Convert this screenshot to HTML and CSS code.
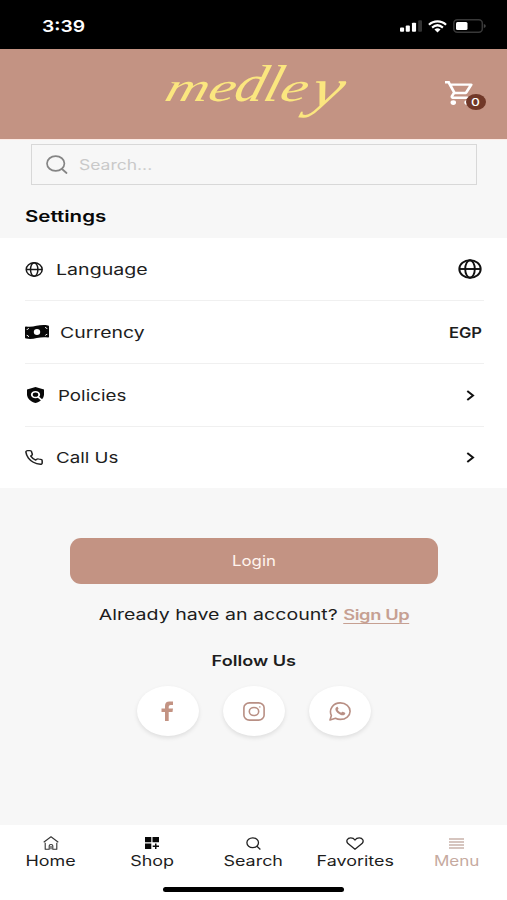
FILE: index.html
```html
<!DOCTYPE html>
<html lang="en">
<head>
<meta charset="utf-8">
<meta name="viewport" content="width=device-width, initial-scale=1">
<title>Medley – Settings</title>
<link rel="stylesheet" href="styles.css">
</head>
<body>
<div class="app">
  <div class="status">
    <span class="time"><span class="wide">3:39</span></span>
    <div class="indicators">
      <svg class="signal" viewBox="0 0 23 12" width="22" height="12"><rect x="0" y="7.500" width="4.300" height="4.500" rx="1" fill="#fff"/><rect x="6" y="5.500" width="4.300" height="6.500" rx="1" fill="#fff"/><rect x="12.500" y="2.500" width="4.300" height="9.500" rx="1" fill="#fff"/><rect x="19" y="0" width="4" height="12" rx="1" fill="#333"/></svg>
      <svg viewBox="0 0 20 13" width="19" height="13" fill="none" stroke="#fff" stroke-width="2.300"><path d="M1 4.700C6-.1 14-.1 19 4.700M4.300 7.700C7.800 4.600 12.200 4.600 15.700 7.700"/><path d="M6.800 9.700Q10 7.200 13.200 9.700L10 12.700Z" fill="#fff" stroke="none"/></svg>
      <svg viewBox="0 0 33 14" width="33" height="14"><rect x=".8" y=".8" width="28.500" height="12.400" rx="3.500" fill="none" stroke="#383838" stroke-width="1.500"/><rect x="3" y="3" width="11.500" height="8" rx="1.500" fill="#fff"/><path d="M30.800 5v4q2-.7 2-2t-2-2" fill="#444"/></svg>
    </div>
  </div>

  <header class="header">
    <svg class="logo" viewBox="0 0 190 76" width="190" height="76" role="img" aria-label="medley">
      <g class="logo-text" transform="translate(0 44) skewX(-16)">
        <text class="logo-low" x="4" y="0" textLength="70" lengthAdjust="spacingAndGlyphs">me</text>
        <text class="logo-tall" x="73" y="0" textLength="46" lengthAdjust="spacingAndGlyphs">dl</text>
        <text class="logo-low" x="119" y="0" textLength="27" lengthAdjust="spacingAndGlyphs">e</text>
        <text class="logo-tail" x="150" y="5" textLength="32" lengthAdjust="spacingAndGlyphs">y</text>
      </g>
    </svg>
    <div class="cart">
      <svg viewBox="1 2 21 20" width="29" height="24" preserveAspectRatio="none" fill="#fff"><path d="M15.550 13c.75 0 1.410-.41 1.750-1.030l3.580-6.490A.996.996 0 0 0 20.010 4H5.210l-.94-2H1v2h2l3.600 7.590-1.350 2.440C4.520 15.370 5.480 17 7 17h12v-2H7l1.100-2zM6.160 6h12.150l-2.760 5H8.530zM7 18a2 2 0 1 0 0 4 2 2 0 0 0 0-4m10 0a2 2 0 1 0 0 4 2 2 0 0 0 0-4"/></svg>
      <span class="badge"><span class="wide">0</span></span>
    </div>
  </header>

  <div class="search">
    <svg viewBox="0 0 22 19" width="22" height="19" fill="none" stroke="#858585" stroke-width="1.700" stroke-linecap="round"><ellipse cx="9.700" cy="8.500" rx="8.700" ry="7.400"/><path d="M16 14l4.500 4"/></svg>
    <span class="wide placeholder">Search...</span>
  </div>

  <h1 class="title"><span class="wide">Settings</span></h1>

  <main class="list">
    <div class="row">
      <svg class="globe" viewBox="0 0 18 15" width="18" height="15" fill="none" stroke="#181818" stroke-width="1.500"><ellipse cx="9.200" cy="7.500" rx="8" ry="6.700"/><ellipse cx="9.200" cy="7.500" rx="3.700" ry="6.700"/><path d="M1 7.500h16"/></svg>
      <span class="wide label language">Language</span>
      <svg class="end" viewBox="0 0 24 20" width="24" height="20" fill="none" stroke="#111" stroke-width="1.900"><ellipse cx="12" cy="10" rx="10.700" ry="8.700"/><ellipse cx="12" cy="10" rx="4.800" ry="8.700"/><path d="M1.500 10h21"/></svg>
    </div>
    <div class="row currency-row">
      <svg viewBox="0 0 24 14" width="24" height="14"><path d="M0 2.200Q0 1.400 1 1.500C9 3 14-1.200 23 .5Q24 .7 24 1.500V11.800Q24 12.700 23 12.500C14 11 9 15.200 1 13.500Q0 13.300 0 12.500Z" fill="#080808"/><ellipse cx="12" cy="7" rx="3.200" ry="3" fill="#fff"/><path d="M1.700 4.500Q3.500 4.500 3.700 3.200M20.300 2Q20.600 3.500 22.300 3.500M1.700 10.300Q3.500 10.300 3.700 12M20.300 10.700Q20.600 9.300 22.300 9.300" fill="none" stroke="#fff" stroke-width=".9"/></svg>
      <span class="wide label currency">Currency</span>
      <span class="wide end code">EGP</span>
    </div>
    <div class="row policies-row">
      <svg viewBox="3 1 18 22" width="17" height="16" preserveAspectRatio="none"><path d="M12 1 3 4.500V11c0 5.500 3.800 10.500 9 12 5.200-1.500 9-6.500 9-12V4.500Z" fill="#080808"/><circle cx="12" cy="11.500" r="3.900" fill="none" stroke="#fff" stroke-width="2"/><path d="m14.500 14.300 5 5.500" stroke="#fff" stroke-width="2"/></svg>
      <span class="wide label policies">Policies</span>
      <svg class="end chevron" viewBox="0 0 9 11" width="9" height="11"><path d="M1.300 1 7 5.500 1.300 10"/></svg>
    </div>
    <div class="row">
      <svg viewBox="1 1 22 22" width="18" height="15" preserveAspectRatio="none" fill="none" stroke="#222" stroke-width="1.900" stroke-linejoin="round"><path d="M22 16.920v3a2 2 0 0 1-2.180 2 19.790 19.790 0 0 1-8.630-3.070 19.500 19.500 0 0 1-6-6A19.790 19.790 0 0 1 2.120 4.180 2 2 0 0 1 4.110 2h3a2 2 0 0 1 2 1.720c.13.960.36 1.900.7 2.810a2 2 0 0 1-.45 2.110L8.090 9.910a16 16 0 0 0 6 6l1.270-1.270a2 2 0 0 1 2.110-.45c.91.340 1.850.57 2.810.7A2 2 0 0 1 22 16.920z"/></svg>
      <span class="wide label call">Call Us</span>
      <svg class="end chevron" viewBox="0 0 9 11" width="9" height="11"><path d="M1.300 1 7 5.500 1.300 10"/></svg>
    </div>
  </main>

  <section class="account">
    <button class="login"><span class="wide">Login</span></button>
    <p class="signup"><span class="wide">Already have an account? <a>Sign Up</a></span></p>
    <h2 class="follow"><span class="wide">Follow Us</span></h2>
    <div class="socials">
      <div class="social"><svg viewBox="0 0 13 20" width="13" height="20"><path d="M4 20V11H.5V7.600H4V5Q4 .6 8.500.6H12V4H9.600Q7.700 4 7.700 5.700V7.600H12L11.500 11H7.700V20Z" fill="#c39383"/></svg></div>
      <div class="social"><svg viewBox="0 0 22 19" width="22" height="19" fill="none" stroke="#b88f84" stroke-width="1.600"><rect x=".9" y=".9" width="20.200" height="17.200" rx="5.500" ry="4.800"/><ellipse cx="11" cy="9.500" rx="4.700" ry="4"/><ellipse cx="16.800" cy="4.900" rx=".9" ry=".7" fill="#b88f84" stroke="none"/></svg></div>
      <div class="social"><svg viewBox="0 0 22 19" width="22" height="19"><path d="M1 18 2.400 13.500C-.5 7.500 4 .9 11.300.9c5.500 0 9.800 3.700 9.800 8.300s-4.300 8.200-9.800 8.200c-1.800 0-3.400-.4-4.800-1.100Z" fill="none" stroke="#b88f84" stroke-width="1.600" stroke-linejoin="round"/><path d="M7.800 4.900C5.300 6.200 6.500 9 9 11.200c2.600 2.200 6 3.300 7.200.5.200-.8 0-.9-.6-1.200l-1.900-.8c-.5-.2-.7.1-1.300.9-.4.400-3.700-2-3.700-2.800.8-.8.900-1 .7-1.500L8.700 5c-.2-.3-.5-.3-.9-.1Z" fill="#b88f84"/></svg></div>
    </div>
  </section>

  <nav class="tabs">
    <div class="tab"><svg viewBox="0 0 16 14" width="16" height="14" fill="none" stroke="#333" stroke-width="1.100" stroke-linejoin="round"><path d="M.7 6.200 8 .8l7.300 5.400M2.200 6.800v6.400h4V9.800q0-1.300 1.800-1.300t1.800 1.300v3.400h4V6.800M8 10v3.200"/></svg><span class="wide home">Home</span></div>
    <div class="tab"><svg viewBox="0 0 14 12" width="14" height="12" fill="#080808"><path d="M0 0h6.300v5.300H0zM7.500 0H14v5.300H7.500zM0 6.500h6.300V12H0z"/><path d="M10.750 6.500V12M7.700 9.250H14" stroke="#080808" stroke-width="1.500"/></svg><span class="wide shop">Shop</span></div>
    <div class="tab"><svg viewBox="0 0 15 13" width="15" height="13" fill="none" stroke="#222" stroke-width="1.300"><ellipse cx="6.700" cy="5.700" rx="5.800" ry="4.900"/><path d="m10.900 9.200 3.500 3.200"/></svg><span class="wide find">Search</span></div>
    <div class="tab"><svg viewBox="0 0 18 13" width="18" height="13" fill="none" stroke="#222" stroke-width="1.300"><path d="M9 12.200 2 6.600C-.4 4 1.400.8 4.700.8Q7.500.8 9 3 10.500.8 13.300.8C16.600.8 18.400 4 16 6.600Z"/></svg><span class="wide favorites">Favorites</span></div>
    <div class="tab active"><svg viewBox="0 0 15 11" width="15" height="11" stroke="#c9b3ab" stroke-width="1.300"><path d="M0 1h15M0 4h15M0 7h15M0 10h15"/></svg><span class="wide menu">Menu</span></div>
  </nav>
  <div class="home-bar"><span></span></div>
</div>
</body>
</html>
```
FILE: styles.css
```css
* { box-sizing: border-box; }
body { margin: 0; font-family: Inter, "Liberation Sans", sans-serif; color: #1d1d1d; }
svg { display: block; flex: none; }
.app { width: 507px; height: 900px; display: flex; flex-direction: column; background: #f7f7f7; overflow: hidden; }
.wide { display: inline-block; white-space: nowrap; transform: scaleX(var(--sx, 1.25)); transform-origin: var(--origin, center); }

.status { height: 49px; background: #000; color: #fff; display: flex; justify-content: space-between; align-items: center; padding: 3px 21px 0 42px; flex: none; }
.time { --origin: left; --sx: 1.17; font-size: 16.500px; font-weight: 600; line-height: 20px; }
.indicators { display: flex; align-items: center; gap: 6px; }

.header { height: 91px; flex: none; background: #c39383; border-bottom: 1px solid #fdebe5; display: flex; justify-content: space-between; padding: 0 21px 0 159px; }
.logo { margin-top: 8px; overflow: visible; }
.logo-text { font-family: "Liberation Serif", serif; font-style: italic; fill: #fbe67f; }
.logo-low { font-size: 41px; }
.logo-tall { font-size: 52px; }
.logo-tail { font-size: 54px; }
.cart { position: relative; width: 41px; height: 30px; margin-top: 32px; }
.badge { position: absolute; right: 0; top: 13px; width: 20px; height: 16px; border-radius: 50%; background: #713828; color: #fff; font-size: 11px; font-weight: 500; line-height: 16px; text-align: center; }

.search { height: 41px; flex: none; margin: 4px 30px 0 31px; border: 1px solid #d8d8d8; display: flex; align-items: center; gap: 11px; padding-left: 14px; }
.placeholder { --origin: left; --sx: 1.25; color: #c9c9c9; font-size: 14px; line-height: 18px; }
.title { margin: 0; padding: 7px 0 0 25px; height: 53px; line-height: 48px; font-size: 16px; font-weight: 600; color: #080808; --origin: left; --sx: 1.28; }

.list { height: 250px; flex: none; background: #fff; padding: 0 23px 0 25px; display: grid; grid-template-rows: 63px 63px 63px 61px; }
.row { display: flex; align-items: center; gap: 13px; border-bottom: 1px solid #f0f0f0; }
.row:last-child { border: 0; }
.currency-row { gap: 11px; }
.policies-row { gap: 14px; padding-left: 2px; }
.label { --origin: left; font-size: 15px; line-height: 20px; padding-top: 1px; }
.language { --sx: 1.305; }
.currency { --sx: 1.295; }
.call { padding-top: 0; }
.end { margin-left: auto; margin-right: 2px; }
.code { --origin: right; --sx: 1.18; font-size: 14px; font-weight: 600; }
.chevron { margin-right: 9px; fill: none; stroke: #111; stroke-width: 2; }

.account { flex: 1; display: flex; flex-direction: column; align-items: center; padding-top: 50px; }
.login { width: 368px; height: 46px; border: 0; border-radius: 11px; background: #c39383; color: #fff3ee; font: 400 14.500px Inter, sans-serif; --sx: 1.16; padding: 0 0 2px; }
.signup { margin: 19px 0 0; font-size: 15px; line-height: 24px; --sx: 1.305; }
.signup a { color: #c6a092; font-size: 14px; font-weight: 600; letter-spacing: -.3px; text-decoration: underline; text-underline-offset: 3px; }
.follow { margin: 22px 0 0; font-size: 14.500px; font-weight: 600; line-height: 24px; }
.socials { display: flex; gap: 24px; margin-top: 13px; }
.social { width: 62px; height: 50px; border-radius: 50%; background: #fff; box-shadow: 0 2px 4px rgba(0,0,0,.1); display: grid; place-items: center; }

.tabs { height: 50px; flex: none; background: #fff; display: grid; grid-template-columns: repeat(5, 1fr); }
.tab { display: grid; grid-template-rows: 18px 17px; padding-top: 9px; justify-items: center; align-items: center; align-content: start; font-size: 14px; line-height: 16px; --sx: 1.28; }
.tab .wide { padding-top: 1px; }
.active { color: #c6aaa0; --sx: 1.22; }
.home-bar { height: 25px; flex: none; background: #fff; display: flex; justify-content: center; padding-top: 12px; }
.home-bar span { width: 181px; height: 5px; border-radius: 3px; background: #000; }
```
